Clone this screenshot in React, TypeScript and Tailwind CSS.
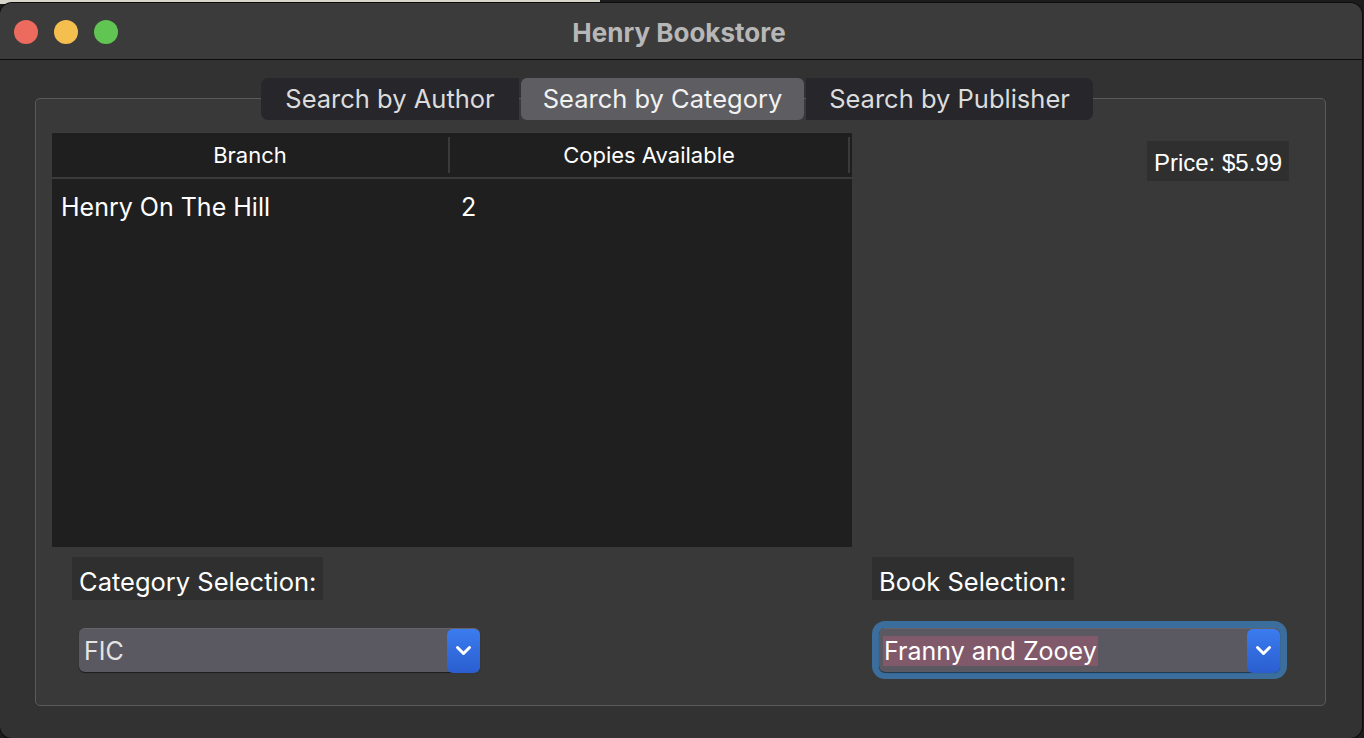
import React from "react";

const sf = { fontFamily: "Inter, 'Noto Sans', 'Liberation Sans', sans-serif" };
const helv = { fontFamily: "'Liberation Sans', Arial, sans-serif" };

function Chevron() {
  return (
    <svg width="17" height="11" viewBox="0 0 17 11" fill="none">
      <path d="M2.5 2.5 L8.5 8.5 L14.5 2.5" stroke="white" strokeWidth="3" strokeLinecap="round" strokeLinejoin="round" />
    </svg>
  );
}

function Combo({ text, highlight }: { text: string; highlight?: boolean }) {
  return (
    <div className="flex h-[44px] w-[401px] items-center rounded-[6px] bg-[#5a5860] shadow-[0_1px_1px_rgba(0,0,0,0.5)] border-t border-[#66646b]">
      <div className="flex-1 pl-[4px]">
        <span
          className={
            "text-[25px] leading-[30px] px-[1px] " +
            (highlight ? "bg-[#80596a] text-white" : "text-[#e4e4e4]")
          }
          style={sf}
        >
          {text}
        </span>
      </div>
      <div className="flex h-[44px] w-[33px] items-center justify-center rounded-[6px] bg-gradient-to-b from-[#3b7cf0] to-[#2a5ecf]">
        <Chevron />
      </div>
    </div>
  );
}

export default function App() {
  return (
    <div className="relative h-[738px] w-[1364px] overflow-hidden bg-[#1c1c1c]">
      <div className="absolute left-0 top-0 h-[4px] w-[600px] bg-[#d9d6cc]" />
      <div className="relative ml-0 mt-[3px] h-[735px] w-[1362px] overflow-hidden rounded-[12px] bg-[#323232] shadow-[0_0_0_1px_#0c0c0c]">
        {/* title bar */}
        <div className="relative flex h-[57px] items-center justify-center border-b border-[#0e0e0e] bg-[#3b3b3b]">
          <div className="absolute left-[14px] top-[17px] flex gap-[16px]">
            <div className="h-[24px] w-[24px] rounded-full bg-[#ed6a5e]" />
            <div className="h-[24px] w-[24px] rounded-full bg-[#f5bf4f]" />
            <div className="h-[24px] w-[24px] rounded-full bg-[#61c554]" />
          </div>
          <div className="pt-[2px] pr-[4px] text-[26px] font-bold text-[#b7b7b7]" style={sf}>
            Henry Bookstore
          </div>
        </div>

        {/* content */}
        <div className="px-[35px] pt-[18px]">
          <div className="relative z-10 mb-[-22px] flex h-[42px] justify-center">
            <div className="mr-[8px] flex gap-[2px]">
              <div className="flex w-[258px] items-center justify-center rounded-l-[7px] bg-[#27262b] text-[25.5px] text-[#dcdcdc]" style={sf}>
                Search by Author
              </div>
              <div className="flex w-[283px] items-center justify-center rounded-[6px] bg-[#5e5d62] text-[25.5px] text-[#f2f2f2]" style={sf}>
                Search by Category
              </div>
              <div className="flex w-[287px] items-center justify-center rounded-r-[7px] bg-[#27262b] text-[25.5px] text-[#dcdcdc]" style={sf}>
                Search by Publisher
              </div>
            </div>
          </div>

          <div className="h-[608px] w-[1291px] rounded-[5px] border border-[#5a5a5a] bg-[#393939] pt-[33px]">
            <div className="flex pl-[16px]">
              {/* table */}
              <div className="flex h-[415px] w-[800px] flex-col bg-[#1f1f1f] border-t border-[#3c3c3c]">
                <div className="flex h-[46px] items-center border-b-2 border-[#3a3a3a] text-[22px] text-white" style={sf}>
                  <div className="flex h-[36px] w-[398px] items-center justify-center border-r-2 border-[#3a3a3a]">Branch</div>
                  <div className="flex h-[36px] w-[400px] items-center justify-center border-r-2 border-[#3a3a3a]">Copies Available</div>
                </div>
                <div className="flex h-[58px] items-center text-[25px] text-white" style={sf}>
                  <div className="w-[400px] pl-[9px]">Henry On The Hill</div>
                  <div className="pl-[9px]">2</div>
                </div>
              </div>
              <div className="flex flex-1 items-start justify-end pr-[36px] pt-[9px]">
                <div className="flex h-[40px] items-center bg-[#2f2f2f] px-[7px] pt-[4px] text-[24px] text-white" style={helv}>
                  Price: $5.99
                </div>
              </div>
            </div>

            <div className="mt-[10px] flex pl-[36px]">
              <div className="w-[800px]">
                <div className="inline-flex h-[43px] items-center bg-[#2f2f2f] px-[7px] pt-[7px] text-[25.5px] text-white" style={sf}>
                  Category Selection:
                </div>
                <div className="ml-[7px] mt-[28px]">
                  <Combo text="FIC" />
                </div>
              </div>
              <div>
                <div className="inline-flex h-[43px] items-center bg-[#2f2f2f] px-[7px] pt-[7px] text-[25.5px] text-white" style={sf}>
                  Book Selection:
                </div>
                <div className="ml-[7px] mt-[28px] w-[401px] rounded-[6px] ring-[7px] ring-[#3b6e9c]">
                  <Combo text="Franny and Zooey" highlight />
                </div>
              </div>
            </div>
          </div>
        </div>
      </div>
    </div>
  );
}
